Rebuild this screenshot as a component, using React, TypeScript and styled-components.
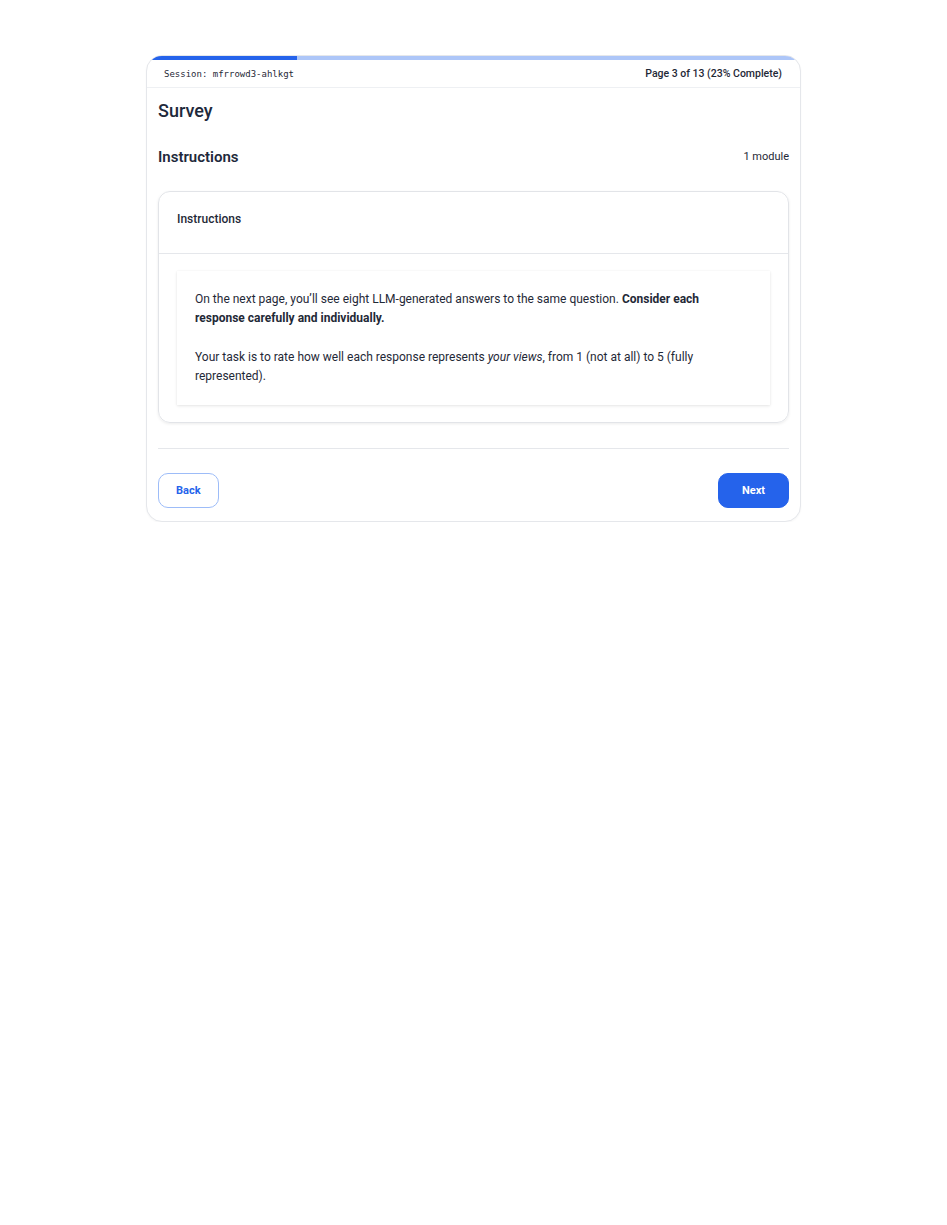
import React from "react";
import styled, { createGlobalStyle } from "styled-components";

const Global = createGlobalStyle`
  html, body { margin: 0; padding: 0; background: #ffffff; }
  body { font-family: Roboto, "Noto Sans", "Liberation Sans", sans-serif; color: #1f2937; }
  * { box-sizing: border-box; }
`;

const Page = styled.div`
  padding-top: 55px;
  display: flex;
  justify-content: center;
`;

const Card = styled.div`
  width: 655px;
  border: 1px solid #e5e7eb;
  border-radius: 16px;
  overflow: hidden;
  background: #fff;
  box-shadow: 0 1px 2px rgba(0, 0, 0, 0.04);
`;

const Track = styled.div`
  height: 5px;
  background: #adc6f8;
  margin: -1px -1px 0;
`;

const Fill = styled.div`
  height: 100%;
  background: #2563eb;
`;

const Header = styled.div`
  height: 28px;
  display: flex;
  align-items: center;
  justify-content: space-between;
  padding: 0 18px 0 17px;
  border-bottom: 1px solid #eef0f3;
`;

const Session = styled.span`
  font-family: "DejaVu Sans Mono", "Liberation Mono", monospace;
  font-size: 9px;
  color: #1f2937;
`;

const PageInfo = styled.span`
  font-size: 10.5px;
  font-weight: 500;
  color: #1f2937;
`;

const Body = styled.div`
  padding: 0 11px 13px;
`;

const Title = styled.h1`
  margin: 11px 0 0;
  font-size: 18px;
  line-height: 24px;
  font-weight: 500;
  color: #1e293b;
`;

const SectionRow = styled.div`
  display: flex;
  justify-content: space-between;
  align-items: center;
  margin-top: 23px;
`;

const SectionTitle = styled.h2`
  margin: 0;
  font-size: 15px;
  line-height: 22px;
  font-weight: 600;
  color: #1e293b;
`;

const ModuleCount = styled.span`
  font-size: 11px;
  color: #1f2937;
  margin-top: -2px;
`;

const Module = styled.div`
  margin-top: 23px;
  border: 1px solid #e2e4e8;
  border-radius: 12px;
  box-shadow: 0 1px 3px rgba(0, 0, 0, 0.08);
  overflow: hidden;
`;

const ModuleHeader = styled.div`
  height: 62px;
  padding: 20px 18px 0;
  line-height: 14px;
  border-bottom: 1px solid #e5e7eb;
  font-size: 12px;
  font-weight: 500;
  color: #1f2937;
`;

const ModuleBody = styled.div`
  padding: 17px 18px 17px;
`;

const TextBox = styled.div`
  padding: 19px 26px 19px 18px;
  background: #fff;
  box-shadow: 0 1px 3px rgba(0, 0, 0, 0.1), 0 0 1px rgba(0, 0, 0, 0.06);
  font-size: 12px;
  line-height: 19px;
  color: #1f2937;
`;

const Para = styled.p`
  margin: 0 0 20px;
  &:last-child { margin-bottom: 0; }
`;

const Divider = styled.hr`
  margin: 25px 0 0;
  border: none;
  border-top: 1px solid #e5e7eb;
`;

const Footer = styled.div`
  display: flex;
  justify-content: space-between;
  margin-top: 24px;
`;

const Button = styled.button<{ $primary?: boolean }>`
  height: 35px;
  padding: 0 ${(p) => (p.$primary ? "23px" : "17px")};
  border-radius: 10px;
  font-family: Roboto, "Liberation Sans", sans-serif;
  font-size: 11px;
  font-weight: 700;
  cursor: pointer;
  border: 1px solid ${(p) => (p.$primary ? "#2563eb" : "#9dbcf8")};
  background: ${(p) => (p.$primary ? "#2563eb" : "#ffffff")};
  color: ${(p) => (p.$primary ? "#ffffff" : "#2563eb")};
`;

export default function App() {
  const pct = 23;
  return (
    <>
      <Global />
      <Page>
        <Card>
          <Track>
            <Fill style={{ width: `${pct}%` }} />
          </Track>
          <Header>
            <Session>Session: mfrrowd3-ahlkgt</Session>
            <PageInfo>Page 3 of 13 (23% Complete)</PageInfo>
          </Header>
          <Body>
            <Title>Survey</Title>
            <SectionRow>
              <SectionTitle>Instructions</SectionTitle>
              <ModuleCount>1 module</ModuleCount>
            </SectionRow>
            <Module>
              <ModuleHeader>Instructions</ModuleHeader>
              <ModuleBody>
                <TextBox>
                  <Para>
                    On the next page, you’ll see eight LLM-generated answers to the same question.{" "}
                    <strong>Consider each response carefully and individually.</strong>
                  </Para>
                  <Para>
                    Your task is to rate how well each response represents <em>your views</em>, from 1 (not at
                    all) to 5 (fully represented).
                  </Para>
                </TextBox>
              </ModuleBody>
            </Module>
            <Divider />
            <Footer>
              <Button>Back</Button>
              <Button $primary>Next</Button>
            </Footer>
          </Body>
        </Card>
      </Page>
    </>
  );
}
